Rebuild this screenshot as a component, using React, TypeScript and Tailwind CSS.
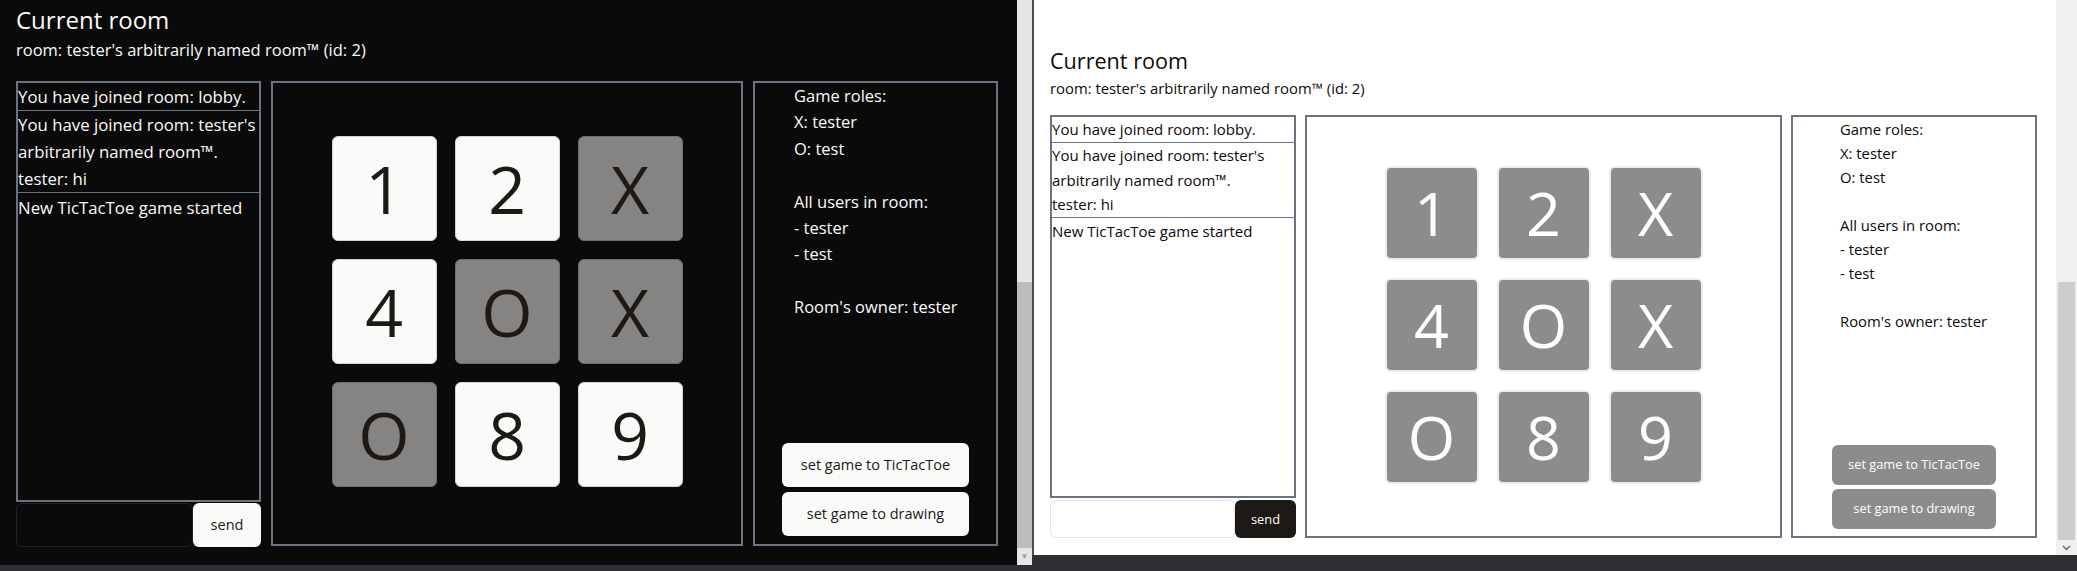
import React from "react";

type Cell = { v: string; taken: boolean };

const cells: Cell[] = [
  { v: "1", taken: false },
  { v: "2", taken: false },
  { v: "X", taken: true },
  { v: "4", taken: false },
  { v: "O", taken: true },
  { v: "X", taken: true },
  { v: "O", taken: true },
  { v: "8", taken: false },
  { v: "9", taken: false },
];

function InfoLines({ cls }: { cls: string }) {
  const lines = [
    "Game roles:",
    "X: tester",
    "O: test",
    "",
    "All users in room:",
    "- tester",
    "- test",
    "",
    "Room's owner: tester",
  ];
  return (
    <div className={cls}>
      {lines.map((l, i) => (
        <div key={i} className="whitespace-nowrap">
          {l === "" ? "\u00a0" : l}
        </div>
      ))}
    </div>
  );
}

function DarkWindow() {
  return (
    <div className="flex h-[565px] shrink-0">
      <div className="w-[1017px] h-[565px] bg-[#0b0a0a] text-[#fafaf9] pl-[16px]">
        <h2 className="pt-[4px] text-[24px] leading-[32px]">Current room</h2>
        <p className="mt-[2px] text-[16.5px] leading-[24px]">
          room: tester's arbitrarily named room™ (id: 2)
        </p>
        <div className="mt-[19px] flex gap-[10px] items-start">
          {/* chat */}
          <div className="w-[245px] flex flex-col">
            <div className="h-[421px] border-2 border-[#6b7280] flex flex-col divide-y divide-[#6b7280] text-[16.8px] leading-[27px]">
              <div className="whitespace-nowrap">You have joined room: lobby.</div>
              <div>
                <div className="whitespace-nowrap">You have joined room: tester's</div>
                <div className="whitespace-nowrap">arbitrarily named room™.</div>
                <div className="whitespace-nowrap">tester: hi</div>
              </div>
              <div className="whitespace-nowrap pt-[1px]">New TicTacToe game started</div>
            </div>
            <div className="mt-[1px] flex h-[44px]">
              <div className="w-[177px] h-full rounded-md border border-[#222222]" />
              <button className="w-[68px] h-full rounded-md bg-[#fafaf9] text-[#1c1917] text-[14.5px]">
                send
              </button>
            </div>
          </div>
          {/* board */}
          <div className="w-[472px] h-[465px] border-2 border-[#6b7280] flex items-center justify-center pb-[4px]">
            <div className="grid grid-cols-[repeat(3,105px)] gap-[18px]">
              {cells.map((c, i) => (
                <div
                  key={i}
                  className={
                    c.taken
                      ? "h-[105px] rounded-md border border-[#6f6e6c] bg-[#858482] text-[#1c1917] flex items-center justify-center text-[66px]"
                      : "h-[105px] rounded-md border border-[#d4d4d8] bg-[#fafaf9] text-[#1c1917] flex items-center justify-center text-[66px]"
                  }
                >
                  {c.v}
                </div>
              ))}
            </div>
          </div>
          {/* info */}
          <div className="w-[245px] h-[465px] border-2 border-[#6b7280] flex flex-col">
            <InfoLines cls="pl-[39px] text-[16.5px] leading-[26.4px]" />
            <div className="mt-auto flex flex-col items-center gap-[5px] pb-[8px]">
              <button className="w-[187px] h-[44px] rounded-md bg-[#fafaf9] text-[#1c1917] text-[14.5px]">
                set game to TicTacToe
              </button>
              <button className="w-[187px] h-[44px] rounded-md bg-[#fafaf9] text-[#1c1917] text-[14.5px]">
                set game to drawing
              </button>
            </div>
          </div>
        </div>
      </div>
      {/* scrollbar */}
      <div className="w-[15px] h-[565px] bg-[#e6e6e6] flex flex-col">
        <div className="h-[282px]" />
        <div className="h-[266px] bg-[#bdbdbd]" />
        <div className="h-[15px] flex items-center justify-center text-[8px] text-[#9a9a9a] leading-none">▼</div>
      </div>
    </div>
  );
}

function LightWindow() {
  return (
    <div className="flex h-[555px] shrink-0">
      <div className="w-[1022px] h-[555px] bg-white text-[#0c0a09] pl-[16px]">
        <h2 className="pt-[46px] text-[21.6px] leading-[29px]">Current room</h2>
        <p className="mt-[2.7px] text-[14.85px] leading-[21.6px]">
          room: tester's arbitrarily named room™ (id: 2)
        </p>
        <div className="mt-[16px] flex gap-[9px] items-start">
          <div className="w-[246px] flex flex-col">
            <div className="h-[383px] border-2 border-[#6b7280] flex flex-col divide-y divide-[#6b7280] text-[15px] leading-[24.7px]">
              <div className="whitespace-nowrap">You have joined room: lobby.</div>
              <div>
                <div className="whitespace-nowrap">You have joined room: tester's</div>
                <div className="whitespace-nowrap">arbitrarily named room™.</div>
                <div className="whitespace-nowrap">tester: hi</div>
              </div>
              <div className="whitespace-nowrap pt-[1px]">New TicTacToe game started</div>
            </div>
            <div className="mt-[2px] flex h-[38px]">
              <div className="w-[185px] h-full rounded-md border border-[#e7e5e4]" />
              <button className="w-[61px] h-full rounded-md bg-[#1c1917] text-white text-[12.8px]">
                send
              </button>
            </div>
          </div>
          <div className="w-[477px] h-[423px] border-2 border-[#6b7280] flex items-center justify-center pb-[4px]">
            <div className="grid grid-cols-[repeat(3,94px)] gap-[18px]">
              {cells.map((c, i) => (
                <div
                  key={i}
                  className="h-[94px] rounded-md border-2 border-[#ececec] bg-[#8c8c8b] text-white font-normal flex items-center justify-center text-[61px]"
                >
                  {c.v}
                </div>
              ))}
            </div>
          </div>
          <div className="w-[246px] h-[423px] border-2 border-[#6b7280] flex flex-col">
            <InfoLines cls="pl-[47px] text-[14.85px] leading-[24px]" />
            <div className="mt-auto flex flex-col items-center gap-[4.7px] pb-[7.7px]">
              <button className="w-[164px] h-[39.3px] rounded-md bg-[#8c8c8b] text-white text-[12.8px]">
                set game to TicTacToe
              </button>
              <button className="w-[164px] h-[39.3px] rounded-md bg-[#8c8c8b] text-white text-[12.8px]">
                set game to drawing
              </button>
            </div>
          </div>
        </div>
      </div>
      <div className="w-[21px] h-[555px] bg-[#f0f0f0] flex flex-col">
        <div className="h-[282px]" />
        <div className="h-[258px] bg-[#cdcdcd] mx-[2px]" />
        <div className="h-[15px] flex items-center justify-center">
          <svg width="9" height="6" viewBox="0 0 9 6">
            <path d="M1 1 L4.5 4.5 L8 1" stroke="#606060" strokeWidth="1.3" fill="none" />
          </svg>
        </div>
      </div>
    </div>
  );
}

export default function App() {
  return (
    <div className="w-[2077px] h-[571px] bg-[#2f3035] flex items-start overflow-hidden font-['Open_Sans',sans-serif]">
      <DarkWindow />
      <div className="w-[2px] h-[555px] bg-[#4b4d52] shrink-0" />
      <LightWindow />
    </div>
  );
}
